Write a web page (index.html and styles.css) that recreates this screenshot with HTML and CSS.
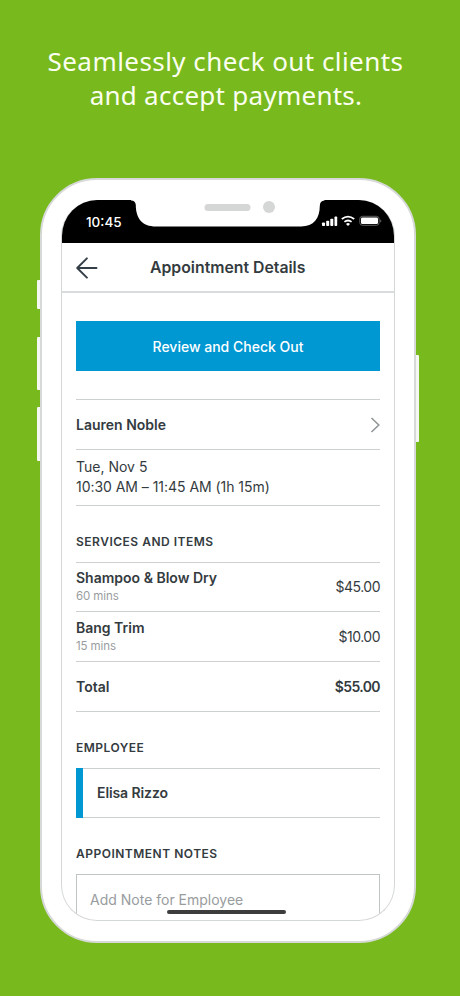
FILE: index.html
```html
<!DOCTYPE html>
<html lang="en">
<head>
<meta charset="utf-8">
<title>Appointment Details</title>
<link rel="stylesheet" href="styles.css">
</head>
<body>
<h1 class="headline"><span class="headline-top">Seamlessly check out clients</span><br><span class="headline-bottom">and accept payments.</span></h1>
<main class="phone">
  <i class="side mute"></i><i class="side volume-up"></i><i class="side volume-down"></i><i class="side power"></i>
  <div class="screen">
    <div class="status">
      <svg class="notch" width="332" height="43" viewBox="0 0 332 43">
        <path fill="#fff" d="M69 -1V.4Q73.6.6 73.8 5C73.8 18 80 26.5 94 26.5H239C252 26.5 257.8 18 257.8 6Q257.8.6 262.5.4V-1Z"/>
        <rect x="142.500" y="4" width="46" height="7" rx="3.500" fill="#d5d7d7"/>
        <circle cx="207" cy="7" r="6" fill="#d5d7d7"/>
      </svg>
      <span class="time">10:45</span>
      <svg class="signals" width="62" height="14" viewBox="0 0 62 14" fill="#fff">
        <rect x="1" y="8.500" width="3" height="3.500" rx=".8"/><rect x="5.200" y="6.800" width="3" height="5.200" rx=".8"/><rect x="9.300" y="4.800" width="3" height="7.200" rx=".8"/><rect x="13.500" y="2.500" width="2.700" height="9.500" rx=".8"/>
        <g fill="none" stroke="#fff" stroke-width="1.800"><path d="M20.800 5Q27 .2 33.200 5"/><path d="M23.400 7.900Q27 5 30.600 7.900"/></g>
        <path d="M25 9.900Q27 8.200 29 9.900L27 12Z"/>
        <rect x="38.800" y="2.300" width="19.300" height="9" rx="2.600" fill="none" stroke="#777" stroke-width=".8"/>
        <rect x="40" y="3.500" width="17" height="6.600" rx="1.400"/><path fill="#777" d="M59.300 5.200Q61.500 7 59.300 8.500Z"/>
      </svg>
    </div>
    <header class="bar">
      <svg class="back" width="22" height="22" viewBox="0 0 22 22" fill="none" stroke="#343e46" stroke-width="1.900" stroke-linecap="round" stroke-linejoin="round"><path d="M20.500 11H1.200M10.900 1.300L1.200 11L10.900 20.700"/></svg>
      <span class="title">Appointment Details</span>
    </header>
    <div class="content">
      <div class="checkout"><span>Review and Check Out</span></div>
      <div class="row client"><b class="client-name">Lauren Noble</b>
        <svg width="10" height="16" viewBox="0 0 10 16" fill="none" stroke="#939799" stroke-width="1.600"><path d="M1.500 1L8.800 8L1.500 15"/></svg>
      </div>
      <div class="when"><span class="date">Tue, Nov 5</span><span class="hours">10:30 AM – 11:45 AM (1h 15m)</span></div>
      <h2 class="label">SERVICES AND ITEMS</h2>
      <div class="row item first"><div class="desc"><b>Shampoo &amp; Blow Dry</b><small>60 mins</small></div><span class="price">$45.00</span></div>
      <div class="row item"><div class="desc"><b>Bang Trim</b><small>15 mins</small></div><span class="price">$10.00</span></div>
      <div class="row total"><b>Total</b><b class="sum">$55.00</b></div>
      <h2 class="label">EMPLOYEE</h2>
      <div class="employee"><b>Elisa Rizzo</b></div>
      <h2 class="label">APPOINTMENT NOTES</h2>
      <div class="note">Add Note for Employee</div>
    </div>
    <i class="home"></i>
  </div>
</main>
</body>
</html>
```
FILE: styles.css
```css
* { box-sizing: border-box; }
body {
  margin: 0;
  height: 996px;
  overflow: hidden;
  background: #78b91e;
  color: #343b40;
  font: 400 14px/20px Inter, sans-serif;
}
b { font-weight: 600; }
.headline {
  margin: 0;
  padding-top: 44px;
  height: 178px;
  color: #fbfff0;
  text-align: center;
  white-space: nowrap;
  font: 400 26px/34px "Noto Sans", sans-serif;
}
.headline-top { margin-left: -9px; letter-spacing: .44px; }
.headline-bottom { margin-left: -8px; letter-spacing: .26px; }
.phone {
  position: relative;
  width: 376px;
  height: 765px;
  margin-left: 40px;
  padding: 20px 19px;
  border: 2px solid #d6d9d7;
  border-radius: 57px;
  background: #fff;
}
.side {
  position: absolute;
  width: 3px;
  left: -5px;
  background: #f5f7f4;
  border-radius: 1px 0 0 1px;
}
.mute { top: 100px; height: 29px; }
.volume-up { top: 157px; height: 53px; }
.volume-down { top: 227px; height: 54px; }
.power { top: 175px; left: auto; right: -5px; height: 87px; border-radius: 0 1px 1px 0; }
.screen {
  position: relative;
  width: 334px;
  height: 721px;
  overflow: hidden;
  border: 1px solid #d5d8d8;
  border-top: 0;
  border-radius: 36px;
  background: #fff;
}
.status {
  position: relative;
  display: flex;
  justify-content: space-between;
  height: 43px;
  padding: 14px 11px 0 24px;
  background: #000;
  color: #fff;
}
.notch { position: absolute; left: 0; top: 0; }
.time { font-weight: 500; font-size: 13.500px; line-height: 17px; }
.bar {
  display: flex;
  align-items: center;
  height: 50px;
  padding: 1px 0 0 14px;
  border-bottom: 2px solid #dadddd;
}
.title { margin: 1px 0 0 52px; font-size: 15.800px; font-weight: 600; }
.content { padding: 28px 14px 0; }
.checkout {
  display: grid;
  place-items: center;
  height: 50px;
  padding-top: 1px;
  background: #0098d3;
  color: #fff;
  font-weight: 500;
}
.row {
  display: flex;
  align-items: center;
  justify-content: space-between;
  height: 50px;
  border-bottom: 1px solid #ccd0d0;
}
.client { height: 51px; margin-top: 28px; border-top: 1px solid #ccd0d0; }
.when {
  display: flex;
  flex-direction: column;
  height: 56px;
  padding-top: 7px;
  border-bottom: 1px solid #ccd0d0;
}
.hours { letter-spacing: -.04px; }
.label { margin: 0; padding-top: 28px; height: 56px; font: 600 12px/16px Inter, sans-serif; letter-spacing: .5px; }
.item.first { border-top: 1px solid #ccd0d0; }
.desc { display: flex; flex-direction: column; align-self: flex-start; padding-top: 6px; }
.first .desc { padding-top: 5px; }
.price { letter-spacing: -.5px; }
.sum { letter-spacing: -.6px; }
small { color: #999d9f; font-size: 11.500px; line-height: 17px; letter-spacing: -.1px; }
.employee {
  display: flex;
  align-items: center;
  height: 50px;
  padding-left: 14px;
  border-left: 7px solid #0098d3;
  box-shadow: inset 0 1px #ccd0d0, inset 0 -1px #ccd0d0;
  letter-spacing: -.1px;
}
.note {
  height: 80px;
  padding: 15px 13px;
  border: 1px solid #bec5c3;
  color: #989c9e;
}
.home {
  position: absolute;
  left: 105px;
  bottom: 6px;
  width: 119px;
  height: 4px;
  border-radius: 2px;
  background: #3d3d3d;
}
```
